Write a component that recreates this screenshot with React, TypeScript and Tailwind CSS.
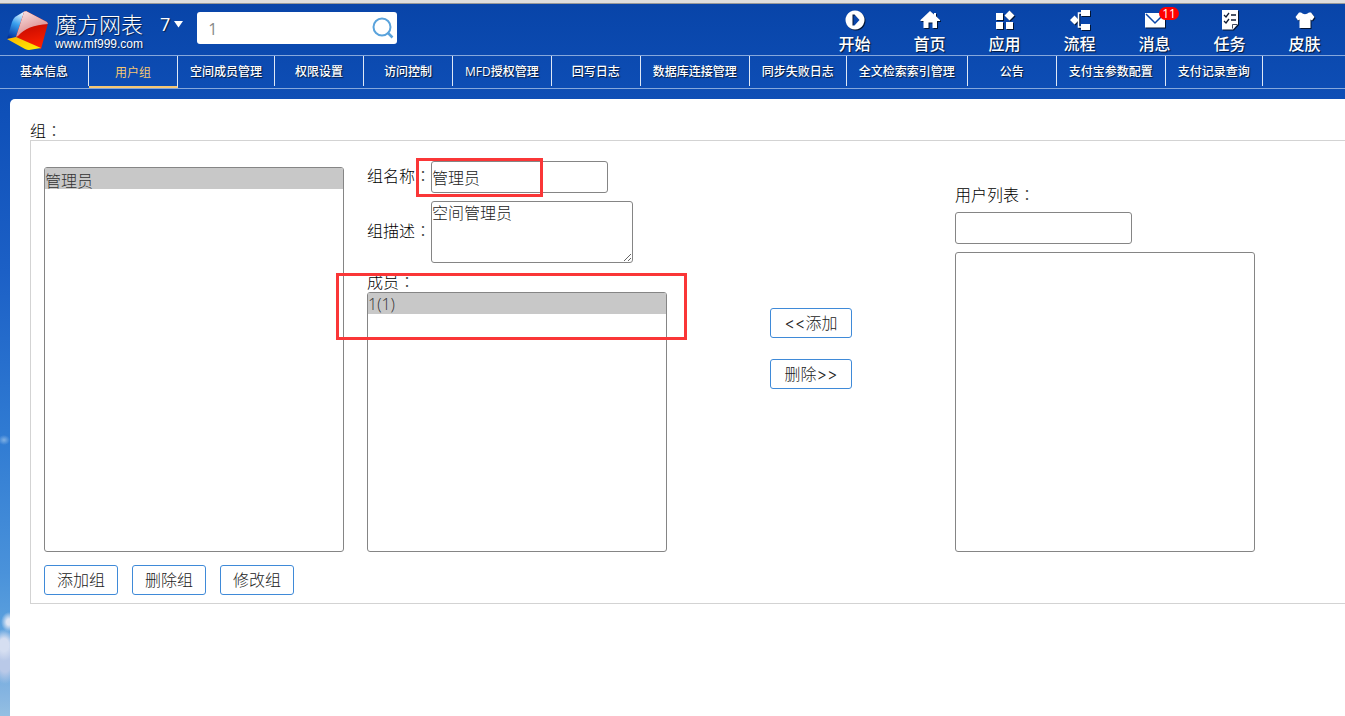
import React from "react";

type IconProps = {
  icon: string;
};

type ListBoxProps = {
  id: string;
  label?: string;
  items: string[];
  className: string;
};

const menuItems = [
  { icon: "start", label: "开始" },
  { icon: "home", label: "首页" },
  { icon: "apps", label: "应用" },
  { icon: "flow", label: "流程" },
  { icon: "message", label: "消息", badge: 11 },
  { icon: "task", label: "任务" },
  { icon: "skin", label: "皮肤" },
];

const tabs = [
  "基本信息",
  "用户组",
  "空间成员管理",
  "权限设置",
  "访问控制",
  "MFD授权管理",
  "回写日志",
  "数据库连接管理",
  "同步失败日志",
  "全文检索索引管理",
  "公告",
  "支付宝参数配置",
  "支付记录查询",
];

const Logo = () => (
  <svg width="42" height="42" viewBox="0 0 42 42" aria-hidden="true">
    <defs>
      <linearGradient id="blueFace" x1="0.6" y1="0" x2="0.3" y2="1">
        <stop offset="0" stopColor="#e8f6ff" />
        <stop offset="0.45" stopColor="#3aa0ee" />
        <stop offset="1" stopColor="#00309c" />
      </linearGradient>
      <linearGradient id="pinkFace" x1="0" y1="0" x2="0.5" y2="1">
        <stop offset="0" stopColor="#fbe9ea" />
        <stop offset="1" stopColor="#d98283" />
      </linearGradient>
      <linearGradient id="redFace" x1="0.3" y1="0" x2="0.5" y2="1">
        <stop offset="0" stopColor="#a80000" />
        <stop offset="1" stopColor="#ff2000" />
      </linearGradient>
      <linearGradient id="yellowFace" x1="0" y1="0" x2="1" y2="1">
        <stop offset="0" stopColor="#ffb400" />
        <stop offset="1" stopColor="#fff000" />
      </linearGradient>
    </defs>
    <path d="M18 1 L8 7 Q6 9 5 12 L0 29 L10 27 Z" fill="url(#blueFace)" />
    <path d="M19 1 L40 12 Q41 13 40.500 15 L34 39 L9 27 L17 2 Z" fill="url(#redFace)" />
    <path d="M19 1 L40 12 L41 14 Q20 15 11 26 L9 27 L17 2 Z" fill="url(#pinkFace)" />
    <path d="M0 29 L9 27 L34 38 L22 40 Q20 40 18 39 Z" fill="url(#yellowFace)" />
  </svg>
);

const MenuIcon = (props: IconProps) => {
  const { icon } = props;
  const renderIcon = (icon: string) => {
    switch (icon) {
      case "start":
        return (
          <path
            fillRule="evenodd"
            d="M10 0.500a9.500 9.500 0 1 0 0.010 0z M7.500 4.500 L9.500 4.500 L14.500 10 L9.500 15.500 L7.500 15.500 Z"
          />
        );
      case "home":
        return <path d="M10 1 L14 4.500 V3 H16 V6.300 L20 10 V11 H17 V18 H12.500 V12.500 H8.500 V18 H3.500 V11 H0.500 V10 Z" />;
      case "apps":
        return (
          <path d="M1 3h7v7H1z M1 12h7v7H1z M11 12h7v7H11z M14.500 0.500 L19.500 5.500 L14.500 10.500 L9.500 5.500Z" />
        );
      case "flow":
        return (
          <>
            <path d="M4.500 5.500 L9 10 L4.500 14.500 L0 10Z M11 0h9v6h-9z M11 14h9v6h-9z" />
            <path d="M12 3H8.500V17H12" fill="none" stroke="#fff" strokeWidth="1.500" />
          </>
        );
      case "message":
        return (
          <>
            <path d="M0 3h20v14.500H0z" />
            <path d="M1 4 L10 13 L19 4" fill="none" stroke="#0a46a8" strokeWidth="1.500" />
          </>
        );
      case "task":
        return (
          <>
            <path d="M2 0h16v14l-5 5.500H2z" />
            <path
              d="M4 5l2 2 3-4 M4 11l2 2 3-4 M11 5h5 M11 10h5"
              fill="none"
              stroke="#111c33"
              strokeWidth="1.300"
            />
            <path d="M12.500 18.500v-4h4.500" fill="none" stroke="#111c33" strokeWidth="0.800" />
          </>
        );
      case "skin":
        return (
          <path d="M6 2.500 Q10 6 14 2.500 L16 2.500 L19.500 7 L17 10.500 L15.500 9.500 V18 H4.500 V9.500 L3 10.500 L0.500 7 L4 2.500Z" />
        );
      default:
        return null;
    }
  };
  return (
    <svg
      className="drop-shadow-[1px_1px_0_rgba(0,0,0,0.7)]"
      width="20"
      height="20"
      viewBox="0 0 20 20"
      fill="#fff"
      aria-hidden="true"
    >
      {renderIcon(icon)}
    </svg>
  );
};

// full-width colon centred in its em box
const Colon = () => <span className="font-['Noto_Sans_CJK_TC',sans-serif] text-[#444]">：</span>;

const ListBox = (props: ListBoxProps) => {
  const { id, label, items, className } = props;
  return (
    <select
      id={id}
      aria-label={label}
      multiple
      defaultValue={items}
      className={`block w-[300px] overflow-hidden rounded-[3px] border border-[#858585] bg-white p-0 text-base text-[#333] outline-none ${className}`}
    >
      {items.map((item) => (
        <option
          key={item}
          value={item}
          className="h-[21px] p-0 leading-[20px] font-light [-webkit-text-fill-color:#333] checked:bg-[linear-gradient(#c8c8c8,#c8c8c8)]"
        >
          {item}
        </option>
      ))}
    </select>
  );
};

const ActionButton = (props: { className: string; children: React.ReactNode }) => (
  <button
    type="button"
    className={`h-[30px] rounded-[3px] border border-[#3f8ad8] bg-white text-base leading-7 text-[#222] ${props.className}`}
  >
    {props.children}
  </button>
);

const Header = () => (
  <header className="flex h-[51px] justify-between pr-[3px] text-white">
    <div className="flex items-start">
      <a href="#home" className="flex items-start pl-[7px] pt-[6px] text-shadow-[1px_1px_1px_rgba(0,0,0,0.6)]">
        <Logo />
        <span className="ml-[6px] block">
          <span className="block text-[22px] leading-[28px] font-light">魔方网表</span>
          <span className="block font-['Liberation_Sans',sans-serif] text-xs leading-3">
            www.mf999.com
          </span>
        </span>
      </a>
      <button
        type="button"
        className="ml-[17px] mt-2 flex items-center gap-1 text-lg leading-6 text-shadow-[1px_1px_1px_rgba(0,0,0,0.6)]"
      >
        7
        <svg width="9" height="7" viewBox="0 0 9 7" fill="#fff" aria-hidden="true">
          <path d="M0 0h9L4.500 6.500z" />
        </svg>
      </button>
      <form className="ml-[14px] mt-2 flex h-8 w-[200px] items-center rounded-[3px] bg-white pr-[3px]">
        <input
          type="text"
          aria-label="搜索"
          defaultValue="1"
          className="h-8 min-w-0 flex-1 pt-[2px] pl-[11px] text-base text-[#888] outline-none"
        />
        <button type="button" aria-label="搜索">
          <svg width="22" height="22" viewBox="0 0 22 22" fill="none" stroke="#5aa3dc" strokeWidth="2" aria-hidden="true">
            <circle cx="10" cy="10" r="8.500" />
            <path d="M15.500 15.500L20.500 20.500" strokeWidth="2.500" />
          </svg>
        </button>
      </form>
    </div>
    <nav className="flex">
      {menuItems.map((item) => (
        <a
          key={item.label}
          href={`#${item.icon}`}
          className="relative flex w-[75px] flex-col items-center pt-[6px] text-base text-shadow-[1px_1px_1px_rgba(0,0,0,0.7)]"
        >
          <MenuIcon icon={item.icon} />
          <span className="mt-1 leading-5 font-medium">{item.label}</span>
          {item.badge && (
            <span className="absolute top-[3px] left-[42px] h-[13px] w-5 rounded-full bg-[#f00] text-center text-xs leading-[13px] text-shadow-none">
              {item.badge}
            </span>
          )}
        </a>
      ))}
    </nav>
  </header>
);

const TabBar = () => (
  <nav className="flex h-[34px] border-y border-[#86a8dc] text-xs text-white">
    {tabs.map((tab) =>
      tab === "用户组" ? (
        <a
          key={tab}
          href="#tab"
          aria-current="page"
          className="h-8 min-w-[89px] border-r border-b-2 border-r-[#dfe8f6] border-b-[#f7c873] px-3 text-center leading-[34px] whitespace-nowrap text-[#f7c873]"
        >
          {tab}
        </a>
      ) : (
        <a
          key={tab}
          href="#tab"
          className="h-[30px] min-w-[89px] border-r border-[#dfe8f6] px-3 text-center leading-8 font-medium whitespace-nowrap text-shadow-[1px_1px_1px_rgba(0,0,0,0.7)]"
        >
          {tab}
        </a>
      )
    )}
  </nav>
);

const GroupPanel = () => (
  <section className="pt-[21px] pl-5">
    <h2 className="h-5 text-base leading-5">
      组<Colon />
    </h2>
    <div className="border border-r-0 border-[#d3d3d3] pr-[90px] pb-2 pl-[13px]">
      <div className="flex pt-1">
        <div className="self-end">
          <ListBox id="groups" label="组" items={["管理员"]} className="h-[385px]" />
        </div>

        <div className="ml-[23px] pt-4">
          <div className="relative flex items-center">
            <label htmlFor="groupName" className="pb-1">
              组名称
              <Colon />
            </label>
            <input
              id="groupName"
              type="text"
              defaultValue="管理员"
              className="h-8 w-[177px] rounded-[3px] border border-[#858585] text-[#222] outline-none"
            />
            <div className="pointer-events-none absolute -top-[3px] left-[49px] h-[39px] w-[127px] border-3 border-[#fa3637]" />
          </div>
          <div className="mt-2 flex items-center">
            <label htmlFor="groupDesc" className="pb-1">
              组描述
              <Colon />
            </label>
            <textarea
              id="groupDesc"
              defaultValue="空间管理员"
              className="block h-[62px] w-[202px] rounded-[3px] border border-[#858585] leading-[22px] text-[#222] outline-none"
            />
          </div>
          <div className="relative mt-2">
            <label htmlFor="members" className="block h-[21px] leading-[21px]">
              成员
              <Colon />
            </label>
            <ListBox id="members" items={["1(1)"]} className="h-[260px]" />
            <div className="pointer-events-none absolute top-[2px] -left-[31px] h-[67px] w-[351px] border-3 border-[#fa3637]" />
          </div>
        </div>

        <div className="flex flex-1 flex-col items-center justify-center gap-[21px]">
          <ActionButton className="w-[82px]">
            <span className="font-['Inter',sans-serif]">&lt;&lt;</span>添加
          </ActionButton>
          <ActionButton className="w-[82px]">
            删除<span className="font-['Inter',sans-serif]">&gt;&gt;</span>
          </ActionButton>
        </div>

        <div className="self-end">
          <label htmlFor="userSearch" className="block h-6 leading-6">
            用户列表
            <Colon />
          </label>
          <input
            id="userSearch"
            type="text"
            className="mt-[6px] mb-2 block h-8 w-[177px] rounded-[3px] border border-[#858585] outline-none"
          />
          <ListBox id="users" label="用户列表" items={[]} className="h-[300px]" />
        </div>
      </div>

      <div className="mt-[13px] flex gap-[14px]">
        <ActionButton className="w-[74px]">添加组</ActionButton>
        <ActionButton className="w-[74px]">删除组</ActionButton>
        <ActionButton className="w-[74px]">修改组</ActionButton>
      </div>
    </div>
  </section>
);

const App = () => {
  return (
    <div className="flex min-h-screen flex-col bg-[radial-gradient(8px_10px_at_9px_622px,#dfe6f4_30%,transparent),radial-gradient(12px_16px_at_4px_645px,#d5def1_40%,transparent),radial-gradient(14px_24px_at_5px_660px,#b9c9e8_50%,transparent),radial-gradient(6px_5px_at_4px_440px,#7fb0e4,transparent),linear-gradient(#0844a8_0%,#0f50b8_16%,#1c60c6_38%,#2f7ad2_60%,#4a92da_80%,#5a9fdd_87%,#86b5e1_97%,#94bfe2_100%)] font-['Open_Sans','Noto_Sans_CJK_SC',sans-serif] text-base font-light text-black">
      <div className="h-1 border-b border-[#999] bg-[#dedede]" />
      <div className="font-normal">
        <Header />
        <TabBar />
      </div>
      <main className="mt-[10px] ml-[10px] flex-1 rounded-tl-[5px] bg-white">
        <GroupPanel />
      </main>
    </div>
  );
};

export default App;
